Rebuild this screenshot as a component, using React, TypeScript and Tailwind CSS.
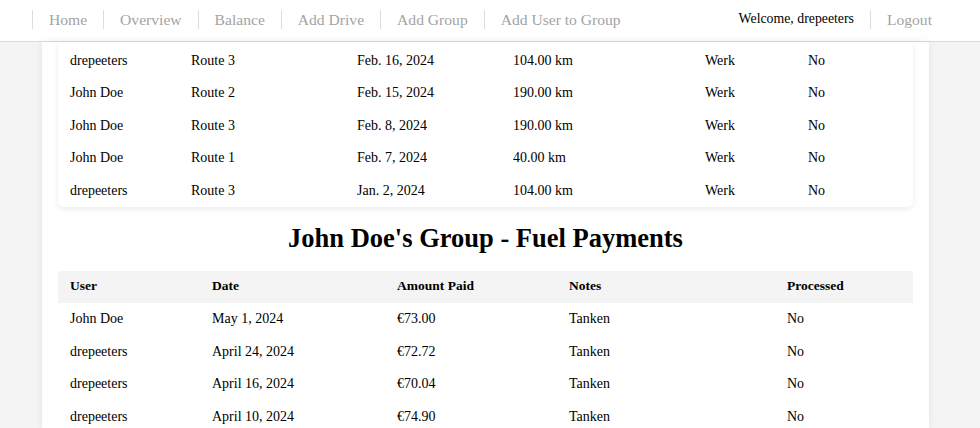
import React from 'react';

const navLinks = ['Home', 'Overview', 'Balance', 'Add Drive', 'Add Group', 'Add User to Group'];

const drives = [
  ['drepeeters', 'Route 3', 'Feb. 16, 2024', '104.00 km', 'Werk', 'No'],
  ['John Doe', 'Route 2', 'Feb. 15, 2024', '190.00 km', 'Werk', 'No'],
  ['John Doe', 'Route 3', 'Feb. 8, 2024', '190.00 km', 'Werk', 'No'],
  ['John Doe', 'Route 1', 'Feb. 7, 2024', '40.00 km', 'Werk', 'No'],
  ['drepeeters', 'Route 3', 'Jan. 2, 2024', '104.00 km', 'Werk', 'No'],
];

const payments = [
  ['John Doe', 'May 1, 2024', '€73.00', 'Tanken', 'No'],
  ['drepeeters', 'April 24, 2024', '€72.72', 'Tanken', 'No'],
  ['drepeeters', 'April 16, 2024', '€70.04', 'Tanken', 'No'],
  ['drepeeters', 'April 10, 2024', '€74.90', 'Tanken', 'No'],
];

const driveCols = ['w-[121px]', 'w-[166px]', 'w-[156px]', 'w-[192px]', 'w-[103px]', 'w-[116px]'];
const paymentCols = ['w-[142px]', 'w-[185px]', 'w-[172px]', 'w-[218px]', 'w-[137px]'];
const paymentHeaders = ['User', 'Date', 'Amount Paid', 'Notes', 'Processed'];

export default function App() {
  return (
    <div className="h-[428px] overflow-hidden bg-[#f4f4f4] text-black font-['Liberation_Serif',serif]">
      {/* Top navigation */}
      <nav className="h-[42px] bg-white border-b border-[#dcdcdc] flex items-center pl-[32px] pr-[48px] pb-[2px]">
        <ul className="flex items-center">
          {navLinks.map((link) => (
            <li key={link} className="border-l border-[#dddddd] px-4 h-[19px] flex items-center">
              <span className="text-[15.6px] text-[#a3a3a3] leading-none">{link}</span>
            </li>
          ))}
        </ul>
        <div className="ml-auto flex items-center">
          <span className="text-[13.8px] pr-4">Welcome, drepeeters</span>
          <span className="border-l border-[#dddddd] pl-4 h-[19px] flex items-center text-[15.6px] text-[#a3a3a3] leading-none">
            Logout
          </span>
        </div>
      </nav>

      {/* Main content container */}
      <main className="ml-[42px] w-[887px] h-[386px] bg-white shadow-[0_0_8px_rgba(0,0,0,0.08)] px-4 overflow-hidden">
        {/* Drives table (scrolled) */}
        <div className="bg-white rounded-b-md shadow-[0_2px_6px_rgba(0,0,0,0.08)] pt-[2px]">
          {drives.map((row, i) => (
            <div key={i} className="flex h-[32.5px] items-center text-[14px]">
              {row.map((cell, j) => (
                <div key={j} className={`${driveCols[j]} px-3`}>{cell}</div>
              ))}
            </div>
          ))}
        </div>

        <h2 className="text-center text-[26.5px] font-bold leading-[32px] mt-[15px] mb-[17px]">
          John Doe's Group - Fuel Payments
        </h2>

        {/* Payments table */}
        <div>
          <div className="flex h-[32px] items-center bg-[#f4f4f4] text-[13.5px] font-bold">
            {paymentHeaders.map((h, j) => (
              <div key={h} className={`${paymentCols[j]} px-3`}>{h}</div>
            ))}
          </div>
          {payments.map((row, i) => (
            <div key={i} className="flex h-[32.5px] items-center text-[14px]">
              {row.map((cell, j) => (
                <div key={j} className={`${paymentCols[j]} px-3`}>{cell}</div>
              ))}
            </div>
          ))}
        </div>
      </main>
    </div>
  );
}
